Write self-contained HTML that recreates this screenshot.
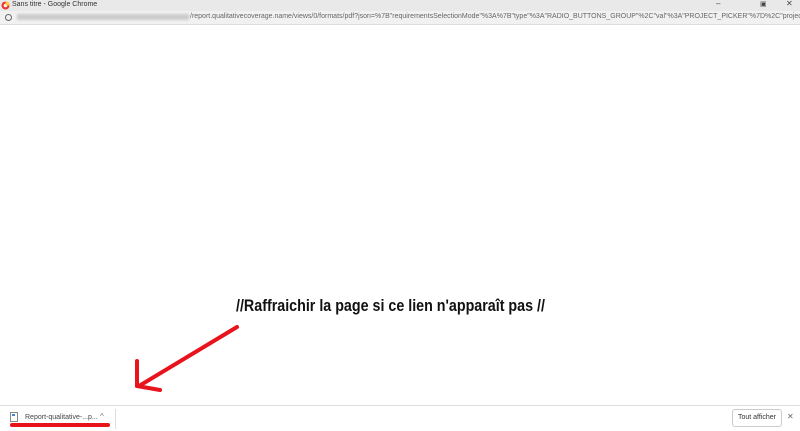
<!DOCTYPE html>
<html><head><meta charset="utf-8"><style>
body{margin:0;width:800px;height:430px;background:#fff;position:relative;overflow:hidden;font-family:"Liberation Sans",sans-serif}
.title{position:absolute;left:0;top:0;width:800px;height:11px;background:#e9e9e9}
.title span{position:absolute;left:12px;top:1px;font-size:7px;color:#333}
.addr{position:absolute;left:0;top:11px;width:800px;height:13px;background:#f1f1f1;border-bottom:1px solid #ddd}
.addr .url{position:absolute;left:190px;top:2px;font-size:7px;color:#666;white-space:nowrap}
.blur{position:absolute;left:17px;top:14px;width:172px;height:6px;background:#ccc;filter:blur(1px)}
.msg{position:absolute;left:236px;top:296px;font-size:17px;font-weight:bold;white-space:nowrap;transform:scaleX(0.84);transform-origin:left top;color:#111}
.dl{position:absolute;left:0;top:405px;width:800px;height:25px;background:#fff;border-top:1px solid #ddd}
</style></head><body>
<div class="title"><span>Sans titre - Google Chrome</span>
<svg style="position:absolute;left:1px;top:1px" width="9" height="9"><circle cx="4.5" cy="4.5" r="4" fill="#e33"/><circle cx="4.5" cy="4.5" r="1.8" fill="#fff"/><path d="M4.5 .5 A4 4 0 0 1 8.5 4.5 L4.5 4.5Z" fill="#fc3"/></svg>
<span style="left:716px;top:-1px;font-size:8px;color:#444">–</span>
<span style="left:760px;top:0px;font-size:7px;color:#444">▣</span>
<span style="left:786px;top:-1px;font-size:8px;color:#444">✕</span>
</div>
<div class="addr"><svg style="position:absolute;left:5px;top:3px" width="7" height="7"><circle cx="3.5" cy="3.5" r="3" fill="none" stroke="#666" stroke-width="1"/></svg>
<div class="url">/report.qualitativecoverage.name/views/0/formats/pdf?json=%7B"requirementsSelectionMode"%3A%7B"type"%3A"RADIO_BUTTONS_GROUP"%2C"val"%3A"PROJECT_PICKER"%7D%2C"projectI...</div></div>
<div class="blur"></div>
<div class="msg">//Raffraichir la page si ce lien n'apparaît pas //</div>
<div class="dl">
<svg style="position:absolute;left:10px;top:6px" width="8" height="10"><rect x=".5" y=".5" width="7" height="9" fill="#fff" stroke="#888"/><rect x="2" y="2" width="3" height="2" fill="#48c"/></svg>
<span style="position:absolute;left:25px;top:8px;font-size:7px;color:#444">Report-qualitative-...p...</span>
<span style="position:absolute;left:100px;top:6px;font-size:8px;color:#777">^</span>
<div style="position:absolute;left:115px;top:3px;width:1px;height:20px;background:#ddd"></div>
<div style="position:absolute;left:732px;top:3px;width:48px;height:16px;border:1px solid #ccc;border-radius:3px;font-size:7px;color:#333;text-align:center;line-height:16px">Tout afficher</div>
<span style="position:absolute;left:787px;top:6px;font-size:8px;color:#666">✕</span>
</div>
<svg style="position:absolute;left:0;top:0" width="800" height="430">
<g stroke="#e8141c" stroke-width="4" stroke-linecap="round" fill="none">
<line x1="237" y1="327" x2="139" y2="386"/>
<line x1="137" y1="361" x2="137" y2="386"/>
<line x1="137" y1="386" x2="160" y2="390"/>
<line x1="12" y1="425" x2="108" y2="425"/>
</g></svg>
</body></html>
